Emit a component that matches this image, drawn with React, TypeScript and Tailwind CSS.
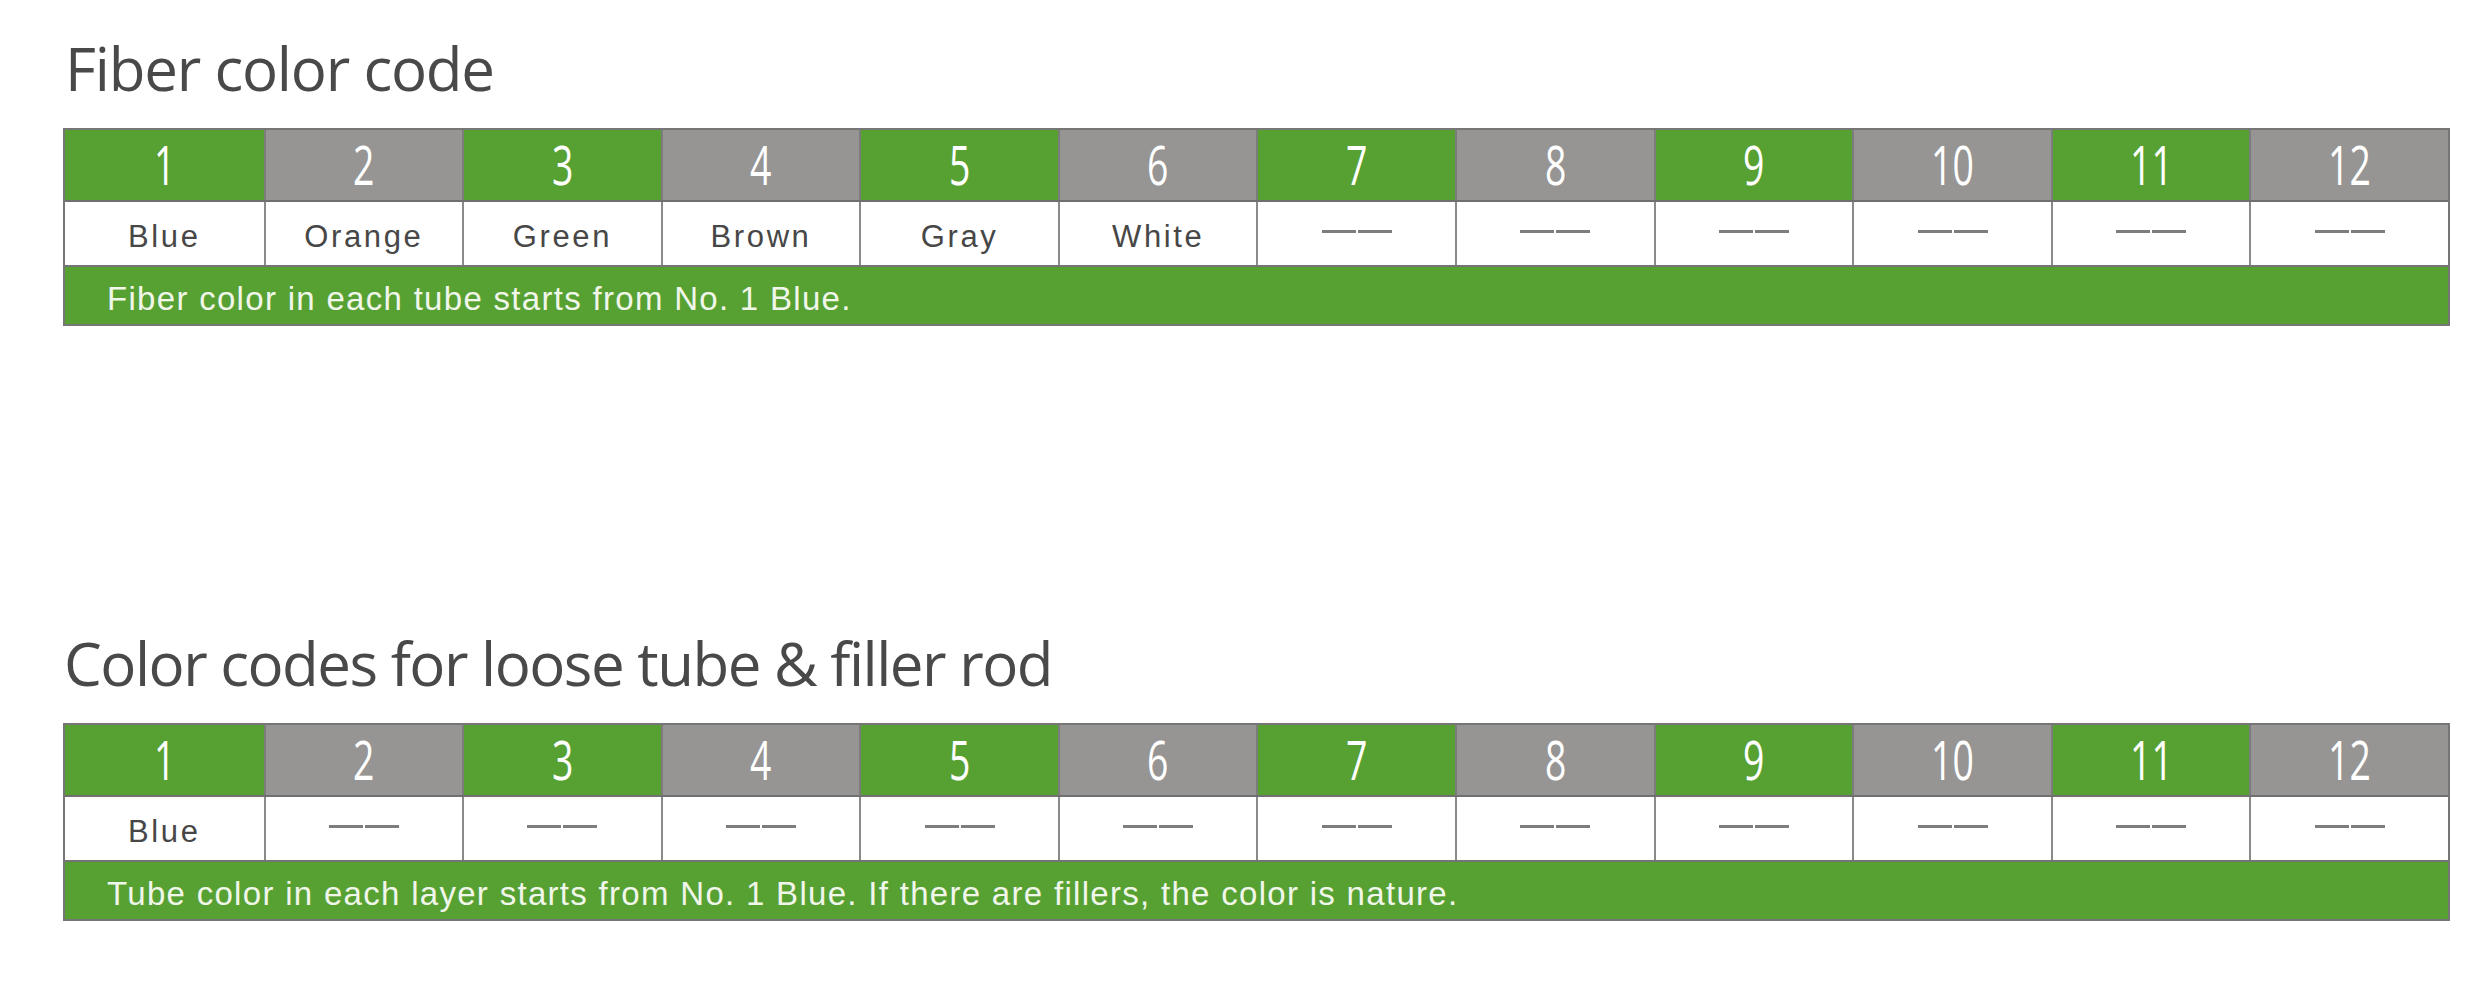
import React from "react";

const nums = [1, 2, 3, 4, 5, 6, 7, 8, 9, 10, 11, 12];

function ColorTable({ values, note }: { values: string[]; note: string }) {
  return (
    <div className="w-[2387px] border-2 border-[#767676] bg-white">
      <div className="grid grid-cols-12 h-[72px] border-b-2 border-[#707070]">
        {nums.map((n, i) => (
          <div
            key={n}
            className={
              (i % 2 === 0 ? "bg-[#57a133] " : "bg-[#969594] ") +
              (i > 0 ? "border-l-2 border-[#7c7c7c] " : "") +
              "flex items-center justify-center pb-[4px]"
            }
          >
            <span className="inline-block scale-x-[0.68] text-[55px] leading-none text-white font-['Open_Sans',sans-serif]">
              {n}
            </span>
          </div>
        ))}
      </div>
      <div className="grid grid-cols-12 h-[65px] border-b-2 border-[#747474]">
        {values.map((v, i) => (
          <div
            key={i}
            className={
              (i > 0 ? "border-l-2 border-[#8a8a8a] " : "") +
              "flex items-center justify-center"
            }
          >
            {v ? (
              <span className="pt-[5px] text-[31px] leading-none tracking-[2.6px] text-[#474747] font-['Liberation_Sans',Arial,sans-serif]">
                {v}
              </span>
            ) : (
              <span className="flex gap-[2px] mb-[4px]">
                <span className="block w-[34px] h-[3px] bg-[#7d7d7d]" />
                <span className="block w-[34px] h-[3px] bg-[#7d7d7d]" />
              </span>
            )}
          </div>
        ))}
      </div>
      <div className="h-[57px] bg-[#57a133] flex items-center pl-[42px] pt-[6px]">
        <span className="text-[33px] leading-none tracking-[1.3px] text-[#f1f6ea] font-['Liberation_Sans',Arial,sans-serif]">
          {note}
        </span>
      </div>
    </div>
  );
}

export default function App() {
  return (
    <div className="w-[2480px] h-[985px] bg-white pl-[63px] flex flex-col">
      <h1 className="mt-[38px] ml-[2px] h-[60px] text-[60px] leading-[60px] tracking-[-1.2px] text-[#4a4949] font-['Open_Sans',sans-serif]">
        Fiber color code
      </h1>
      <div className="mt-[30px]">
        <ColorTable
          values={["Blue", "Orange", "Green", "Brown", "Gray", "White", "", "", "", "", "", ""]}
          note="Fiber color in each tube starts from No. 1 Blue."
        />
      </div>
      <h1 className="mt-[307px] ml-[1px] h-[60px] text-[60px] leading-[60px] tracking-[-1.5px] text-[#4a4949] font-['Open_Sans',sans-serif]">
        Color codes for loose tube &amp; filler rod
      </h1>
      <div className="mt-[30px]">
        <ColorTable
          values={["Blue", "", "", "", "", "", "", "", "", "", "", ""]}
          note="Tube color in each layer starts from No. 1 Blue. If there are fillers, the color is nature."
        />
      </div>
    </div>
  );
}
